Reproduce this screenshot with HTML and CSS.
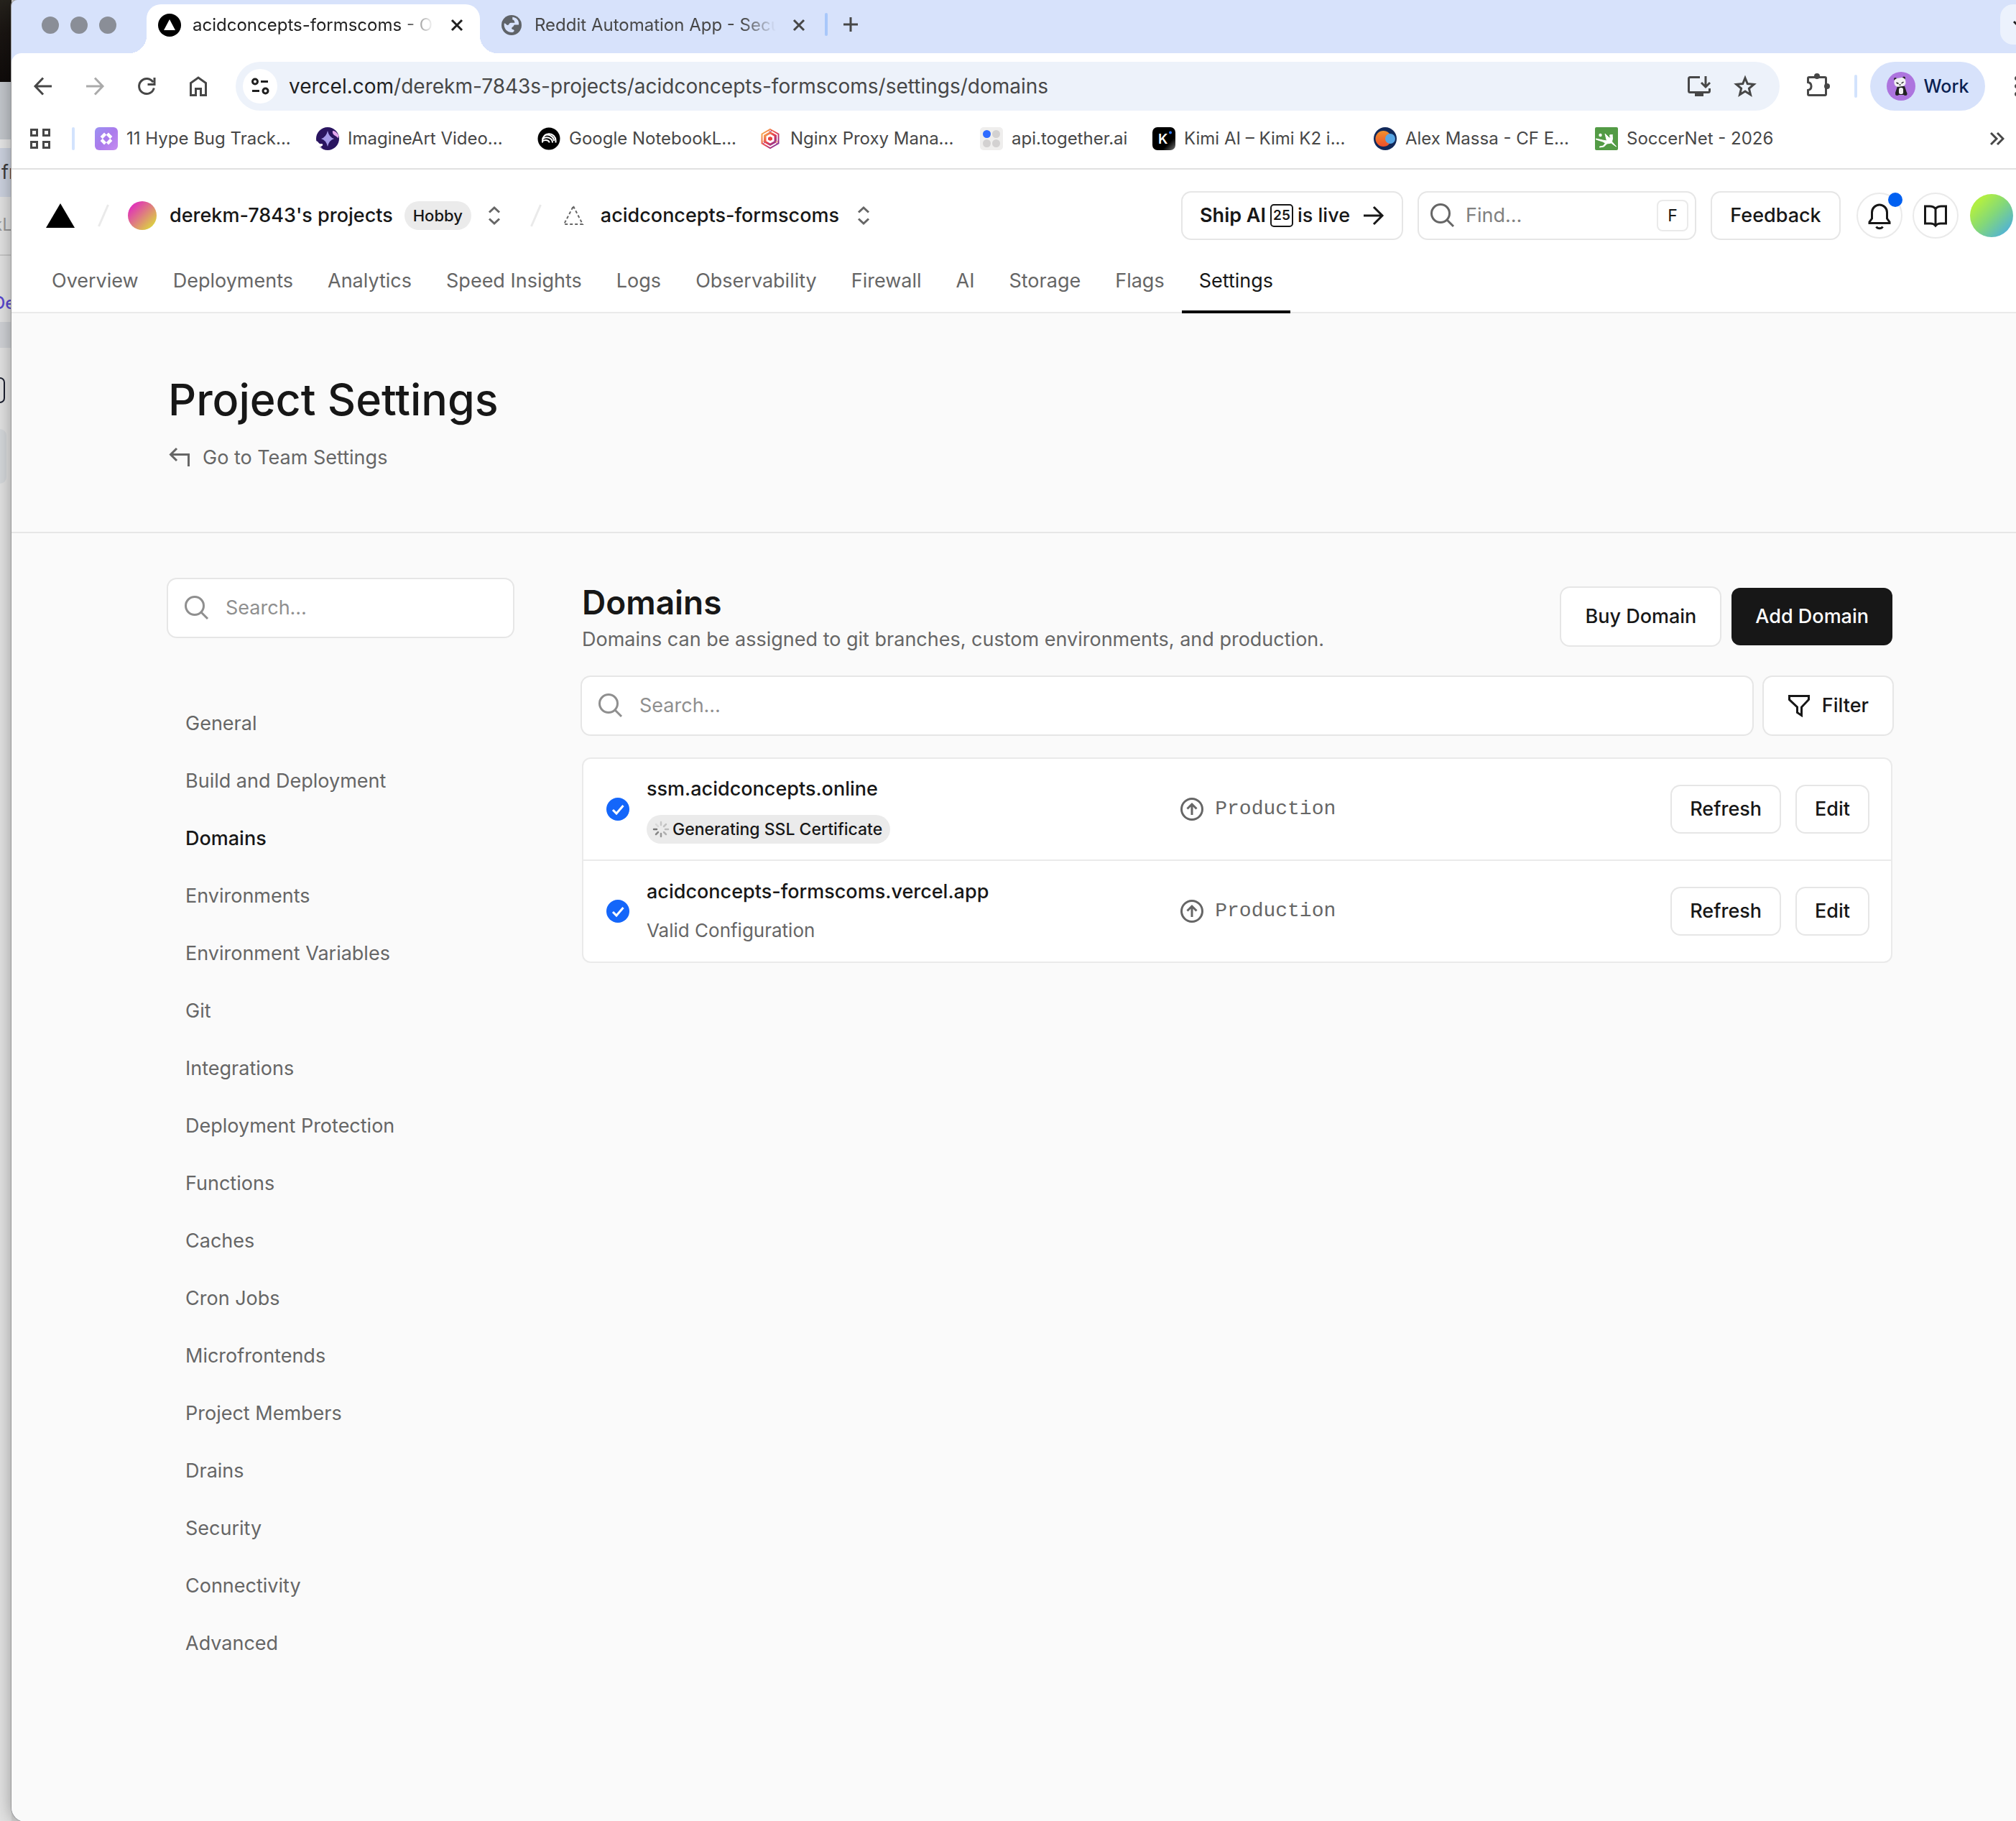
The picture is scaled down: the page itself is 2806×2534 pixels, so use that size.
FILE: index.html
```html
<!DOCTYPE html>
<html lang="en">
<head>
<meta charset="utf-8">
<title>acidconcepts-formscoms - Overview</title>
<link rel="stylesheet" href="styles.css">
</head>
<body>
<div class="desktop">
  <aside class="behind" aria-hidden="true">
    <div class="behind-photo"></div>
    <div class="behind-tabs"></div>
    <div class="behind-gap"></div>
    <div class="behind-url">fr</div>
    <div class="behind-marks"><span>kL</span></div>
    <div class="behind-link"><span>De</span></div>
    <div class="behind-band"></div>
    <div class="behind-field"></div>
    <div class="behind-block"></div>
  </aside>

  <div class="window">
    <div class="tabstrip">
      <div class="lights"><i></i><i></i><i></i></div>
      <div class="tab tab-active">
        <svg class="i32" viewBox="0 0 32 32"><circle cx="16" cy="16" r="16"/><path d="M16 8l8 15H8z" fill="#fff"/></svg>
        <span class="tab-title">acidconcepts-formscoms - Overview</span>
        <button class="tab-close" aria-label="Close tab"><svg class="i20" viewBox="0 0 20 20"><path d="M3 3l14 14M17 3L3 17" stroke="currentColor" stroke-width="3"/></svg></button>
      </div>
      <div class="tab">
        <svg class="i32" viewBox="0 0 32 32"><circle cx="16" cy="16" r="14" fill="#5f6368"/><path d="M14.500 5C11 6.500 11 9 14 9.500c2.500 .5 2 3 0 4-2 .8-1 3-3.500 3H5c-1 7 4 11 9.500 11.500v-4c-3 0-3-3-3.500-4.500h6c3 0 2-3.500 5-3.500 2 0 2 2.500 5 2.500C28 11 23 4.500 14.500 5z" fill="#d7e2fb" transform="rotate(180 16 16) scale(.92) translate(1.500 1.500)"/></svg>
        <span class="tab-title">Reddit Automation App - Security</span>
        <button class="tab-close" aria-label="Close tab"><svg class="i20" viewBox="0 0 20 20"><path d="M3 3l14 14M17 3L3 17" stroke="currentColor" stroke-width="3"/></svg></button>
      </div>
      <span class="tab-sep"></span>
      <button class="new-tab" aria-label="New tab"><svg class="i20" viewBox="0 0 20 20"><path d="M10 0v20M0 10h20" stroke="currentColor" stroke-width="3"/></svg></button>
      <button class="tab-search" aria-label="Search tabs"><svg class="i20" viewBox="0 0 20 20"><path d="M1 6l9 9 9-9" fill="none" stroke="currentColor" stroke-width="3"/></svg></button>
    </div>

    <div class="toolbar">
      <button aria-label="Back"><svg class="i40" viewBox="0 0 40 40"><path class="ln" d="M32 20H10M20 8.500L9 20l11 11.500"/></svg></button>
      <button class="dim" aria-label="Forward"><svg class="i40" viewBox="0 0 40 40"><path class="ln" d="M8 20h22M20 8.500L31 20 20 31.500"/></svg></button>
      <button aria-label="Reload"><svg class="i40" viewBox="0 0 40 40"><path class="ln" d="M29 14.500A10.500 10.500 0 1 0 30.300 22.500M31 8v9.500h-9.500"/></svg></button>
      <button aria-label="Home"><svg class="i40" viewBox="0 0 40 40"><path class="ln" d="M9.500 32.500V15.500L20 8l10.500 7.500v17h-7v-9h-7v9z"/></svg></button>
      <div class="omnibox">
        <button class="site-info" aria-label="Site information"><svg class="i32" viewBox="0 0 32 32"><g fill="none" stroke="currentColor" stroke-width="3"><circle cx="9" cy="9.500" r="3.500"/><path d="M17 9.500h10M5 22.500h10"/><circle cx="23.500" cy="22.500" r="3.500"/></g></svg></button>
        <div class="url"><b>vercel.com</b>/derekm-7843s-projects/acidconcepts-formscoms/settings/domains</div>
        <button aria-label="Install app"><svg class="i40" viewBox="0 0 40 40"><path class="ln" d="M21 7.500H7.500a2 2 0 0 0-2 2V26.500a2 2 0 0 0 2 2h25a2 2 0 0 0 2-2V23M29 6v14M23 15l6 6 6-6"/><path d="M14 29h12v5H14z" fill="currentColor"/></svg></button>
        <button aria-label="Bookmark this page"><svg class="i40" viewBox="0 0 40 40"><path class="ln" d="M20 8.500l3.300 8 8.900.8-6.800 5.800 2.100 8.700-7.500-4.700-7.500 4.700 2.100-8.700-6.800-5.800 8.900-.8z"/></svg></button>
      </div>
      <button class="ext" aria-label="Extensions"><svg class="i40" viewBox="0 0 40 40"><path class="ln" d="M9 7.500h22a1.500 1.500 0 0 1 1.500 1.500v22a1.500 1.500 0 0 1-1.500 1.500H9a1.500 1.500 0 0 1-1.500-1.500v-5.500a5.600 5.600 0 0 0 0-11V9A1.500 1.500 0 0 1 9 7.500z"/><circle cx="20" cy="6" r="4" fill="currentColor"/><circle cx="34" cy="20" r="4" fill="currentColor"/></svg></button>
      <span class="bar-sep"></span>
      <button class="profile">
        <svg class="i40" viewBox="0 0 40 40"><circle cx="20" cy="20" r="20" fill="#ad74de"/><circle cx="12" cy="10" r="2" fill="#222"/><circle cx="24" cy="8.500" r="2" fill="#222"/><path d="M15 20h10l3 9-3 3H15l-3-3z" fill="#222"/><rect x="10.500" y="8.500" width="16" height="12" rx="5" fill="#f1f0f2" transform="rotate(-8 18 15)"/><path d="M13.500 15l3 1.500M20.500 16l3-2M17.500 18h2" stroke="#222" stroke-width="1.500"/><rect x="17" y="22" width="6" height="9" rx="2.500" fill="#f1f0f2"/><circle cx="14.500" cy="30.500" r="2.500" fill="#222"/><circle cx="26" cy="30.500" r="2.500" fill="#222"/></svg>
        Work
      </button>
      <button class="more" aria-label="Menu"><svg class="i40" viewBox="0 0 40 40"><g fill="currentColor"><circle cx="20" cy="9" r="3"/><circle cx="20" cy="20" r="3"/><circle cx="20" cy="31" r="3"/></g></svg></button>
    </div>

    <div class="bookmarks">
      <button aria-label="Apps"><svg class="i32" viewBox="0 0 32 32"><path class="ln" d="M3.500 3.500h8v8h-8zM20.500 3.500h8v8h-8zM3.500 20.500h8v8h-8zM20.500 20.500h8v8h-8z"/></svg></button>
      <span class="bar-sep"></span>
      <a class="mark" href="#"><svg class="i32" viewBox="0 0 32 32"><defs><linearGradient id="hype" x1="0" y1="0" x2="1" y2="1"><stop offset="0" stop-color="#9a92f2"/><stop offset=".5" stop-color="#ab7bec"/><stop offset="1" stop-color="#c68cf0"/></linearGradient></defs><rect width="32" height="32" rx="6" fill="url(#hype)"/><path d="M9.200 14.600l5.400-5.400M17.400 9.200l5.400 5.400M22.800 17.400l-5.400 5.400M14.600 22.800l-5.400-5.400" stroke="#fff" stroke-width="4.500"/></svg><span>11 Hype Bug Track...</span></a>
      <a class="mark" href="#"><svg class="i32" viewBox="0 0 32 32"><circle cx="16" cy="16" r="16" fill="#2a1560"/><path d="M23 5c4 0 6 3 8.500 6.500l-1 4C28 11 22 12 23 5z" fill="#e3a8ee"/><path d="M0 19c4 1 3 5 8 4 3 1 0 4-2 4l3 3-8-5z" fill="#fff"/><path d="M16 5q2 9 9 11-7 2-9 11-2-9-9-11 7-2 9-11z" fill="#a49ae8"/></svg><span>ImagineArt Video...</span></a>
      <a class="mark" href="#"><svg class="i32" viewBox="0 0 32 32"><circle cx="16" cy="16" r="15.500"/><g fill="none" stroke="#fff" stroke-width="2"><path d="M7 21.500v-3a9 9 0 0 1 18.500 0v3"/><path d="M7 16.500c6-4.500 14-1.500 14 5"/><path d="M7 19.500c4-2.500 9.500-1.500 9.500 2"/><path d="M10 11c7-2 13 3 13 8"/></g></svg><span>Google NotebookL...</span></a>
      <a class="mark" href="#"><svg class="i32" viewBox="0 0 32 32"><defs><linearGradient id="ngx" x1="0" y1="0" x2="1" y2="1"><stop offset="0" stop-color="#fbc34a"/><stop offset=".5" stop-color="#e8404f"/><stop offset="1" stop-color="#6d2fb0"/></linearGradient></defs><path d="M16 3l11.500 6.500v13L16 29 4.500 22.500v-13z" fill="none" stroke="url(#ngx)" stroke-width="2"/><path d="M16 6l9 5v10l-9 5-9-5V11z" fill="url(#ngx)"/><path d="M16 9.500l5.500 3v7L16 22.500l-5.500-3v-7z" fill="#fff"/><path d="M16 13l3 1.500v3L16 19l-3-1.500v-3z" fill="#e8433f"/><g fill="#fff" stroke="url(#ngx)"><circle cx="16" cy="5" r="1.500"/><circle cx="6.500" cy="21" r="1.500"/><circle cx="25.500" cy="21" r="1.500"/></g></svg><span>Nginx Proxy Mana...</span></a>
      <a class="mark mark-short" href="#"><svg class="i32" viewBox="0 0 32 32"><rect width="32" height="32" rx="5" fill="#efeeed"/><circle cx="9.500" cy="9.500" r="5.500" fill="#2f6bff"/><g fill="#d3d1d1"><circle cx="22.500" cy="9.500" r="5.500"/><circle cx="9.500" cy="22.500" r="5.500"/><circle cx="22.500" cy="22.500" r="5.500"/></g></svg><span>api.together.ai</span></a>
      <a class="mark" href="#"><svg class="i32" viewBox="0 0 32 32"><defs><linearGradient id="kimi" x1=".4" y1=".4" x2="1" y2="1"><stop offset=".5" stop-color="#000"/><stop offset="1" stop-color="#777"/></linearGradient></defs><rect width="32" height="32" rx="7" fill="url(#kimi)"/><text x="8" y="23" class="k">K</text><circle cx="25" cy="7.500" r="2" fill="#2f7bff"/></svg><span>Kimi AI – Kimi K2 i...</span></a>
      <a class="mark" href="#"><svg class="i32" viewBox="0 0 32 32"><defs><linearGradient id="cfo" x1="0" y1="0" x2="0" y2="1"><stop offset="0" stop-color="#f2912e"/><stop offset="1" stop-color="#ee4f2b"/></linearGradient></defs><circle cx="16" cy="16" r="16" fill="#12295a"/><circle cx="13.500" cy="16" r="11" fill="url(#cfo)"/><circle cx="23" cy="16" r="7" fill="#58a6e4"/></svg><span>Alex Massa - CF E...</span></a>
      <a class="mark" href="#"><svg class="i32" viewBox="0 0 32 32"><rect width="32" height="32" rx="2" fill="#539b45"/><circle cx="7.500" cy="11" r="2.200" fill="#fff"/><circle cx="22" cy="12" r="2" fill="#fff"/><path d="M14 9l6 6 3-1 1-4 .5 6-1 4 6 7-7-5-6 1-4 4-6 1 0-1 5-1 3-4-4-2-9-3v-1l9 2 6 1z" fill="#fff" stroke="#fff"/></svg><span>SoccerNet - 2026</span></a>
      <button class="overflow" aria-label="More bookmarks"><svg class="i20" viewBox="0 0 20 20"><path d="M1 2l8 8-8 8M10 2l8 8-8 8" fill="none" stroke="currentColor" stroke-width="3"/></svg></button>
    </div>

    <div class="page">
      <header class="site-head">
        <div class="crumbs">
          <a class="logo" href="#" aria-label="Home"><svg class="logo-mark" viewBox="0 0 40 34"><path d="M20 0l20 34H0z"/></svg></a>
          <svg class="slash" viewBox="0 0 16 32"><path d="M14.500 1L1.500 31" stroke="#eaeaea" stroke-width="3"/></svg>
          <span class="team-avatar"></span>
          <a class="crumb team" href="#">derekm-7843's projects</a>
          <span class="hobby">Hobby</span>
          <button class="updown" aria-label="Switch team"><svg class="i32" viewBox="0 0 32 32"><path d="M9 11.500L16 5l7 6.500M9 20.500l7 6.500 7-6.500" fill="none" stroke="currentColor" stroke-width="3"/></svg></button>
          <svg class="slash slash-2" viewBox="0 0 16 32"><path d="M14.500 1L1.500 31" stroke="#eaeaea" stroke-width="3"/></svg>
          <svg class="i32 ghost" viewBox="0 0 32 32"><path d="M16 3l13 25H3z" fill="none" stroke="#666" stroke-width="2" stroke-dasharray="4 3"/></svg>
          <a class="crumb project" href="#">acidconcepts-formscoms</a>
          <button class="updown" aria-label="Switch project"><svg class="i32" viewBox="0 0 32 32"><path d="M9 11.500L16 5l7 6.500M9 20.500l7 6.500 7-6.500" fill="none" stroke="currentColor" stroke-width="3"/></svg></button>
        </div>
        <div class="head-tools">
          <a class="ship" href="#"><strong>Ship AI</strong><span class="ship-num">25</span><span>is live</span><svg class="i32" viewBox="0 0 32 32"><path d="M3 16h25M17 4l12 12-12 12" fill="none" stroke="currentColor" stroke-width="3"/></svg></a>
          <label class="find"><svg class="i40" viewBox="0 0 40 40"><circle cx="17" cy="17" r="12.500" fill="none" stroke="currentColor" stroke-width="3"/><path d="M26 26l9 9" stroke="currentColor" stroke-width="3"/></svg><input type="text" placeholder="Find…" aria-label="Find"><kbd>F</kbd></label>
          <button class="feedback">Feedback</button>
          <button class="round bell" aria-label="Notifications"><svg class="i40" viewBox="0 0 40 40"><path d="M6 30.500h28v-1.500l-3.500-5V15.500a10.500 10.500 0 0 0-21 0V24L6 29z" fill="none" stroke="currentColor" stroke-width="3"/><path d="M15.500 35.500a5 4 0 0 0 9 0" fill="none" stroke="currentColor" stroke-width="3"/></svg><i class="dot"></i></button>
          <button class="round" aria-label="Documentation"><svg class="i40" viewBox="0 0 40 40"><path d="M20 10.500C18 8 15 7 12 7H5.500v24H13c3 0 5 .5 7 3 2-2.500 4-3 7-3h7.500V7H28c-3 0-6 1-8 3.500zM20 10v24" fill="none" stroke="currentColor" stroke-width="3"/></svg></button>
          <span class="me"></span>
        </div>
      </header>
      <nav class="tabs">
        <a href="#">Overview</a><a href="#">Deployments</a><a href="#">Analytics</a><a href="#">Speed Insights</a><a href="#">Logs</a><a href="#">Observability</a><a href="#">Firewall</a><a href="#">AI</a><a href="#">Storage</a><a href="#">Flags</a><a href="#" class="current" aria-current="page">Settings</a>
      </nav>

      <section class="hero">
        <h1>Project Settings</h1>
        <a class="back" href="#"><svg class="i32" viewBox="0 0 32 32"><path d="M12 3l-8.500 8.500L12 20M4 11.500h24.500V28" fill="none" stroke="currentColor" stroke-width="3"/></svg>Go to Team Settings</a>
      </section>

      <div class="content">
        <aside class="side">
          <label class="field"><svg class="i40" viewBox="0 0 40 40"><circle cx="17" cy="17" r="12.500" fill="none" stroke="currentColor" stroke-width="3"/><path d="M26 26l9 9" stroke="currentColor" stroke-width="3"/></svg><input type="text" placeholder="Search…" aria-label="Search settings"></label>
          <nav class="side-nav">
            <a href="#">General</a>
            <a href="#">Build and Deployment</a>
            <a href="#" class="current" aria-current="page">Domains</a>
            <a href="#">Environments</a>
            <a href="#">Environment Variables</a>
            <a href="#">Git</a>
            <a href="#">Integrations</a>
            <a href="#">Deployment Protection</a>
            <a href="#">Functions</a>
            <a href="#">Caches</a>
            <a href="#">Cron Jobs</a>
            <a href="#">Microfrontends</a>
            <a href="#">Project Members</a>
            <a href="#">Drains</a>
            <a href="#">Security</a>
            <a href="#">Connectivity</a>
            <a href="#">Advanced</a>
          </nav>
        </aside>
        <main class="main">
          <div class="title-row">
            <div class="titles">
              <h2>Domains</h2>
              <p>Domains can be assigned to git branches, custom environments, and production.</p>
            </div>
            <button class="btn">Buy Domain</button>
            <button class="btn btn-dark">Add Domain</button>
          </div>
          <div class="filter-row">
            <label class="field"><svg class="i40" viewBox="0 0 40 40"><circle cx="17" cy="17" r="12.500" fill="none" stroke="currentColor" stroke-width="3"/><path d="M26 26l9 9" stroke="currentColor" stroke-width="3"/></svg><input type="text" placeholder="Search…" aria-label="Search domains"></label>
            <button class="btn btn-filter"><svg class="i32" viewBox="0 0 32 32"><path d="M2.500 2.500h27v5L19.500 18v11.500l-6-4V18L2.500 7.500z" fill="none" stroke="currentColor" stroke-width="3"/></svg>Filter</button>
          </div>
          <ul class="domains">
            <li>
              <svg class="i32 check" viewBox="0 0 32 32"><circle cx="16" cy="16" r="16" fill="#1466fa"/><path d="M9 17l5 5 9.500-11" fill="none" stroke="#fff" stroke-width="3"/></svg>
              <div class="name">
                <a href="#">ssm.acidconcepts.online</a>
                <span class="status"><svg class="spin" viewBox="0 0 24 24"><g stroke="#777" stroke-width="2.500" stroke-linecap="round"><path d="M12 2v4" opacity=".3"/><path d="M19 5l-3 3" opacity=".35"/><path d="M22 12h-4" opacity=".4"/><path d="M19 19l-3-3" opacity=".5"/><path d="M12 22v-4" opacity=".7"/><path d="M5 19l3-3" opacity=".85"/><path d="M2 12h4"/><path d="M5 5l3 3" opacity=".15"/></g></svg>Generating SSL Certificate</span>
              </div>
              <div class="env"><svg class="i32" viewBox="0 0 32 32"><g fill="none" stroke="currentColor" stroke-width="3"><circle cx="16" cy="16" r="14.500"/><path d="M16 24V9.500M9.500 15.500L16 9l6.500 6.500"/></g></svg>Production</div>
              <button class="btn btn-small">Refresh</button>
              <button class="btn btn-small">Edit</button>
            </li>
            <li>
              <svg class="i32 check" viewBox="0 0 32 32"><circle cx="16" cy="16" r="16" fill="#1466fa"/><path d="M9 17l5 5 9.500-11" fill="none" stroke="#fff" stroke-width="3"/></svg>
              <div class="name">
                <a href="#">acidconcepts-formscoms.vercel.app</a>
                <span class="valid">Valid Configuration</span>
              </div>
              <div class="env"><svg class="i32" viewBox="0 0 32 32"><g fill="none" stroke="currentColor" stroke-width="3"><circle cx="16" cy="16" r="14.500"/><path d="M16 24V9.500M9.500 15.500L16 9l6.500 6.500"/></g></svg>Production</div>
              <button class="btn btn-small">Refresh</button>
              <button class="btn btn-small">Edit</button>
            </li>
          </ul>
        </main>
      </div>
    </div>
  </div>
</div>
</body>
</html>
```
FILE: styles.css
```css
* { box-sizing: border-box; }

body {
  margin: 0;
  font-family: Inter, "Liberation Sans", sans-serif;
  font-size: 27px;
  line-height: 40px;
  color: #171717;
  background: #d6d6d6;
}

a { color: inherit; text-decoration: none; }
button { font: inherit; color: inherit; background: none; border: 0; padding: 0; display: flex; align-items: center; justify-content: center; flex: none; }
input { font: inherit; color: inherit; border: 0; outline: 0; background: none; padding: 0; min-width: 0; flex: 1; }
svg { display: block; flex: none; }
h1, h2, p, ul { margin: 0; padding: 0; }

.i20 { width: 20px; height: 20px; }
.i32 { width: 32px; height: 32px; }
.i40 { width: 40px; height: 40px; }
.ln { fill: none; stroke: currentColor; stroke-width: 3; }

/* desktop, with the edge of another window on the left */
.desktop { display: flex; min-height: 100vh; overflow: hidden; }
.behind { width: 16px; flex: none; background: #e2e2e2; white-space: nowrap; }
.behind > div { overflow: hidden; }
.behind-photo { height: 114px; background: linear-gradient(#26231d, #1a1512 40%, #0f0b0a); }
.behind-tabs { height: 80px; background: #c3c7cc; }
.behind-gap { height: 12px; background: #e6e6e6; }
.behind-url { height: 68px; line-height: 68px; padding-left: 2px; background: #ccd2df; color: #3c3c3c; }
.behind-marks { height: 82px; line-height: 78px; border-bottom: 2px solid #c8c8c8; color: #999; font-size: 24px; }
.behind-link { height: 92px; line-height: 132px; color: #5a48d0; font-weight: 500; font-size: 24px; }
.behind-marks span, .behind-link span { margin-left: -10px; }
.behind-band { height: 36px; background: #d0d2d6; }
.behind-field { width: 7px; height: 36px; margin-top: 41px; border: 2px solid #1c2030; border-left: 0; border-radius: 0 10px 10px 0; }
.behind-block { width: 9px; height: 76px; margin-top: 36px; background: #d5d8db; border-radius: 0 10px 10px 0; }

.window {
  position: relative;
  flex: 1;
  min-width: 0;
  display: flex;
  flex-direction: column;
  overflow: hidden;
  border-radius: 8px 0 0 20px;
  background: #d7e2fb;
  box-shadow: 0 0 0 1px #999, 0 0 24px rgba(0, 0, 0, .35);
}

/* tab strip */
.tabstrip { display: flex; align-items: flex-start; height: 74px; font-size: 24px; color: #474747; }
.lights { display: flex; gap: 16px; padding: 23px 42px 0; width: 188px; }
.lights i { width: 24px; height: 24px; border-radius: 50%; background: #8a8e97; flex: none; }
.tab { position: relative; display: flex; align-items: center; width: 464px; height: 68px; margin-top: 6px; padding: 0 22px 10px 16px; border-radius: 20px 20px 0 0; }
.tab + .tab { padding-left: 28px; padding-right: 10px; }
.tab-active { background: #fff; color: #1f1f1f; }
.tab-active::before, .tab-active::after { content: ""; position: absolute; bottom: 0; width: 24px; height: 24px; }
.tab-active::before { right: 100%; background: radial-gradient(circle at 0 0, transparent 24px, #fff 24px); }
.tab-active::after { left: 100%; background: radial-gradient(circle at 100% 0, transparent 24px, #fff 24px); }
.tab-title { flex: 1; min-width: 0; margin-left: 16px; margin-right: 22px; overflow: hidden; white-space: nowrap; -webkit-mask-image: linear-gradient(90deg, #000 86%, transparent); mask-image: linear-gradient(90deg, #000 86%, transparent); }
.tab-sep { width: 4px; height: 32px; margin: 18px 0 0 16px; border-radius: 2px; background: #a8c7fa; }
.new-tab { margin: 24px 0 0 22px; }
.tab-search { width: 56px; height: 56px; margin: 6px -34px 0 auto; border-radius: 18px; background: #ecf2fd; color: #1f1f1f; }

/* address bar */
.toolbar { display: flex; align-items: center; height: 92px; padding-left: 24px; gap: 32px; background: #fff; border-radius: 14px 0 0 0; color: #474747; }
.dim { color: #aaa; }
.omnibox { flex: 1; min-width: 0; display: flex; align-items: center; gap: 24px; height: 68px; padding: 0 28px 0 10px; border-radius: 34px; background: #edf2fa; }
.site-info { width: 48px; height: 48px; border-radius: 50%; background: #fff; color: #1f1f1f; }
.url { flex: 1; margin-left: -8px; font-size: 28px; }
.url b { font-weight: 400; color: #1f1f1f; }
.bar-sep { width: 4px; height: 32px; border-radius: 2px; background: #d3e3fd; }
.profile { gap: 12px; width: 160px; height: 68px; margin-left: -14px; border-radius: 34px; background: #d7e2fb; color: #0a1f52; font-size: 25px; font-weight: 500; }
.more { margin: 0 -21px 0 -8px; }

/* bookmarks */
.bookmarks { display: flex; align-items: center; height: 70px; padding: 0 16px 14px 24px; background: #fff; border-bottom: 2px solid #e1e1e1; color: #474747; font-size: 24px; }
.bookmarks .bar-sep { margin: 0 28px; }
.mark { display: flex; align-items: center; gap: 12px; width: 276px; margin-right: 32px; white-space: nowrap; flex: none; }
.mark-short { width: 208px; }
.k { font: 600 19px Inter, sans-serif; fill: #fff; }
.overflow { margin-left: auto; }

/* site header */
.page { flex: 1; background: #fafafa; }
.site-head { display: flex; align-items: center; justify-content: space-between; height: 128px; padding: 0 4px 0 48px; background: #fff; }
.crumbs, .head-tools { display: flex; align-items: center; }
.logo-mark { width: 40px; height: 34px; }
.slash { width: 16px; height: 32px; margin: 0 26px 0 32px; }
.slash-2 { margin: 0 28px 0 34px; }
.team-avatar { width: 40px; height: 40px; border-radius: 50%; background: linear-gradient(135deg, #e032b8 15%, #dcd83c 90%); }
.crumb { font-weight: 500; }
.team { margin-left: 18px; }
.hobby { margin: 0 16px; padding: 0 12px; border-radius: 20px; background: #ebebeb; font-size: 22px; font-weight: 500; }
.updown { color: #666; }
.project { margin: 0 18px 0 22px; }
.ship, .find, .feedback { height: 64px; border-radius: 12px; box-shadow: 0 0 0 2px #e6e6e6; }
.ship { display: flex; align-items: center; gap: 6px; padding: 0 24px; font-weight: 500; }
.ship strong { font-weight: 600; }
.ship svg { margin-left: 10px; }
.ship-num { width: 32px; height: 32px; border: 2px solid #171717; border-radius: 5px; font-size: 19px; line-height: 28px; text-align: center; font-weight: 600; }
.find { display: flex; align-items: center; width: 384px; margin: 0 24px; padding: 0 9px 0 13px; color: #666; }
.find input { margin-left: 12px; }
.find input::placeholder { color: #808080; opacity: 1; }
.find kbd { width: 44px; height: 44px; border: 2px solid #eaeaea; border-radius: 8px; font: 400 23px/40px Inter, sans-serif; text-align: center; color: #171717; }
.feedback { width: 177px; font-weight: 500; }
.round { position: relative; width: 64px; height: 64px; margin-left: 14px; border: 2px solid #eaeaea; border-radius: 50%; }
.bell { margin-left: 24px; }
.dot { position: absolute; top: -2px; right: -2px; width: 20px; height: 20px; border-radius: 50%; background: #0060f1; }
.me { width: 60px; height: 60px; margin-left: 16px; border-radius: 50%; background: linear-gradient(135deg, #b0ee44 20%, #84d878 50%, #4eb0dc 90%); }

.tabs { display: flex; height: 72px; padding-left: 32px; background: #fff; border-bottom: 2px solid #eaeaea; color: #666; }
.tabs a { height: 72px; padding: 7px 24px 0; }
.tabs .current { color: #171717; border-bottom: 4px solid #000; }

/* hero */
.hero { height: 306px; padding: 80px 218px 0; border-bottom: 2px solid #e6e6e6; }
h1 { font-size: 61px; line-height: 80px; font-weight: 500; }
.back { display: flex; align-items: center; gap: 16px; margin-top: 21px; color: #666; }

/* settings body */
.content { display: flex; gap: 96px; padding: 64px 172px 208px 218px; }
.side { width: 480px; flex: none; }
.main { flex: 1; min-width: 0; }
.field { display: flex; align-items: center; gap: 20px; height: 80px; padding: 0 20px; border-radius: 12px; background: #fff; box-shadow: 0 0 0 2px #e6e6e6; color: #8f8f8f; }
.field input::placeholder { color: #8f8f8f; opacity: 1; }
.side-nav { display: flex; flex-direction: column; margin-top: 81px; }
.side-nav a { padding: 20px 24px; color: #666; }
.side-nav .current { color: #171717; font-weight: 500; }

.title-row { display: flex; align-items: center; gap: 16px; }
.titles { flex: 1; }
h2 { font-size: 46px; line-height: 64px; font-weight: 600; }
.titles p { color: #666; }
.btn { height: 80px; padding: 0 33px; border-radius: 12px; background: #fff; box-shadow: 0 0 0 2px #e6e6e6; font-weight: 500; }
.btn-dark { background: #171717; color: #fff; box-shadow: none; }
.filter-row { display: flex; gap: 16px; margin: 32px 0; }
.filter-row .field { flex: 1; }
.btn-filter { gap: 16px; }

.domains { list-style: none; border: 2px solid #eaeaea; border-radius: 12px; background: #fff; }
.domains li { display: flex; align-items: center; height: 140px; padding: 0 32px; }
.domains li + li { height: 142px; border-top: 2px solid #eaeaea; }
.name { flex: 1; margin-left: 24px; display: flex; flex-direction: column; align-items: flex-start; }
.name a { font-weight: 500; }
.status { display: flex; align-items: center; gap: 4px; height: 40px; margin-top: 16px; padding: 0 11px 0 8px; border-radius: 20px; background: #ebebeb; font-size: 23px; font-weight: 500; }
.spin { width: 24px; height: 24px; }
.valid { margin-top: 14px; color: #666; font-size: 26px; }
.env { display: flex; align-items: center; gap: 16px; width: 684px; color: #666; font: 400 28px/40px "Liberation Mono", monospace; }
.btn-small { height: 64px; padding: 0 25px; }
.btn-small + .btn-small { margin-left: 24px; }
```
